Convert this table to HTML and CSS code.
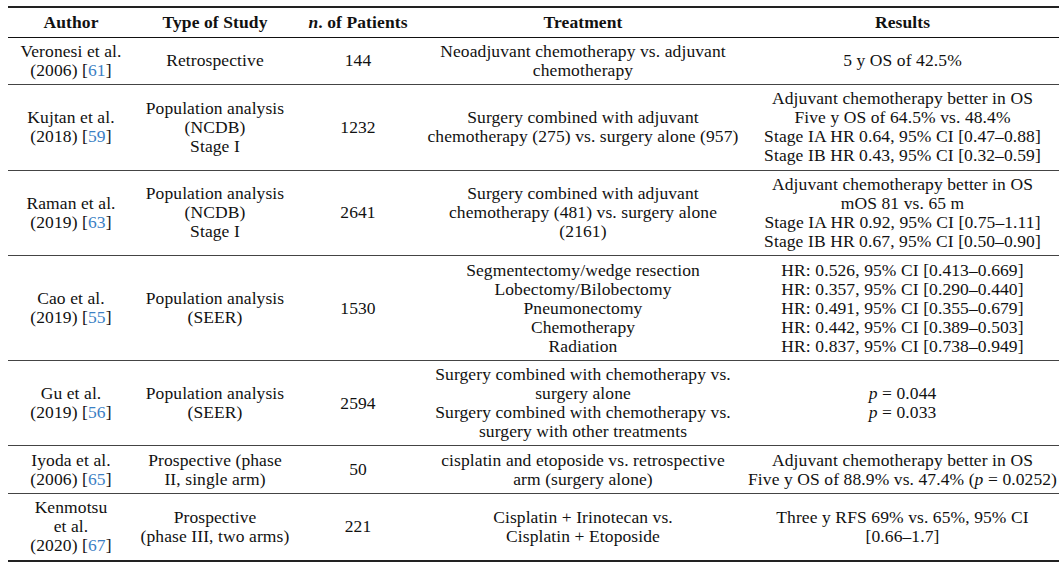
FILE: index.html
```html
<!DOCTYPE html>
<html>
<head>
<meta charset="utf-8">
<link rel="stylesheet" href="styles.css">
</head>
<body>
<table class="tbl">
  <colgroup>
    <col class="c-author">
    <col class="c-type">
    <col class="c-n">
    <col class="c-treat">
    <col class="c-res">
  </colgroup>
  <thead>
    <tr>
      <th>Author</th>
      <th>Type of Study</th>
      <th><i>n</i>. of Patients</th>
      <th>Treatment</th>
      <th>Results</th>
    </tr>
  </thead>
  <tbody>
    <tr>
      <td>Veronesi et al.<br>(2006) [<a class="ref">61</a>]</td>
      <td>Retrospective</td>
      <td>144</td>
      <td>Neoadjuvant chemotherapy vs. adjuvant<br>chemotherapy</td>
      <td>5 y OS of 42.5%</td>
    </tr>
    <tr>
      <td>Kujtan et al.<br>(2018) [<a class="ref">59</a>]</td>
      <td>Population analysis<br>(NCDB)<br>Stage I</td>
      <td>1232</td>
      <td>Surgery combined with adjuvant<br>chemotherapy (275) vs. surgery alone (957)</td>
      <td>Adjuvant chemotherapy better in OS<br>Five y OS of 64.5% vs. 48.4%<br>Stage IA HR 0.64, 95% CI [0.47–0.88]<br>Stage IB HR 0.43, 95% CI [0.32–0.59]</td>
    </tr>
    <tr>
      <td>Raman et al.<br>(2019) [<a class="ref">63</a>]</td>
      <td>Population analysis<br>(NCDB)<br>Stage I</td>
      <td>2641</td>
      <td>Surgery combined with adjuvant<br>chemotherapy (481) vs. surgery alone<br>(2161)</td>
      <td>Adjuvant chemotherapy better in OS<br>mOS 81 vs. 65 m<br>Stage IA HR 0.92, 95% CI [0.75–1.11]<br>Stage IB HR 0.67, 95% CI [0.50–0.90]</td>
    </tr>
    <tr>
      <td>Cao et al.<br>(2019) [<a class="ref">55</a>]</td>
      <td>Population analysis<br>(SEER)</td>
      <td>1530</td>
      <td>Segmentectomy/wedge resection<br>Lobectomy/Bilobectomy<br>Pneumonectomy<br>Chemotherapy<br>Radiation</td>
      <td>HR: 0.526, 95% CI [0.413–0.669]<br>HR: 0.357, 95% CI [0.290–0.440]<br>HR: 0.491, 95% CI [0.355–0.679]<br>HR: 0.442, 95% CI [0.389–0.503]<br>HR: 0.837, 95% CI [0.738–0.949]</td>
    </tr>
    <tr>
      <td>Gu et al.<br>(2019) [<a class="ref">56</a>]</td>
      <td>Population analysis<br>(SEER)</td>
      <td>2594</td>
      <td>Surgery combined with chemotherapy vs.<br>surgery alone<br>Surgery combined with chemotherapy vs.<br>surgery with other treatments</td>
      <td><i>p</i> = 0.044<br><i>p</i> = 0.033</td>
    </tr>
    <tr>
      <td>Iyoda et al.<br>(2006) [<a class="ref">65</a>]</td>
      <td>Prospective (phase<br>II, single arm)</td>
      <td>50</td>
      <td>cisplatin and etoposide vs. retrospective<br>arm (surgery alone)</td>
      <td>Adjuvant chemotherapy better in OS<br>Five y OS of 88.9% vs. 47.4% (<i>p</i> = 0.0252)</td>
    </tr>
    <tr class="last">
      <td>Kenmotsu<br>et al.<br>(2020) [<a class="ref">67</a>]</td>
      <td>Prospective<br>(phase III, two arms)</td>
      <td>221</td>
      <td>Cisplatin + Irinotecan vs.<br>Cisplatin + Etoposide</td>
      <td>Three y RFS 69% vs. 65%, 95% CI<br>[0.66–1.7]</td>
    </tr>
  </tbody>
</table>
</body>
</html>
```

FILE: styles.css
```css
html, body {
  background: #ffffff;
}
body {
  margin: 6px 0 0 8px;
  font-family: "Liberation Serif", "Times New Roman", serif;
  font-size: 17.5px;
  letter-spacing: 0.1px;
  color: #111;
}
.tbl {
  width: 1051px;
  border-collapse: collapse;
  table-layout: fixed;
  border-top: 2px solid #222;
  border-bottom: 2px solid #222;
}
.c-author { width: 126px; }
.c-type { width: 162px; }
.c-n { width: 124px; }
.c-treat { width: 326px; }
.c-res { width: 313px; }
.tbl th, .tbl td {
  text-align: center;
  vertical-align: middle;
  line-height: 19px;
  padding: 4.3px 2px;
  white-space: nowrap;
}
.tbl th {
  font-weight: bold;
  padding: 5px 2px 4.5px;
  border-bottom: 1px solid #111;
}
.tbl td {
  border-bottom: 1px solid #444;
}
.tbl .ref {
  color: #3b80c4;
  text-decoration: none;
}
```
